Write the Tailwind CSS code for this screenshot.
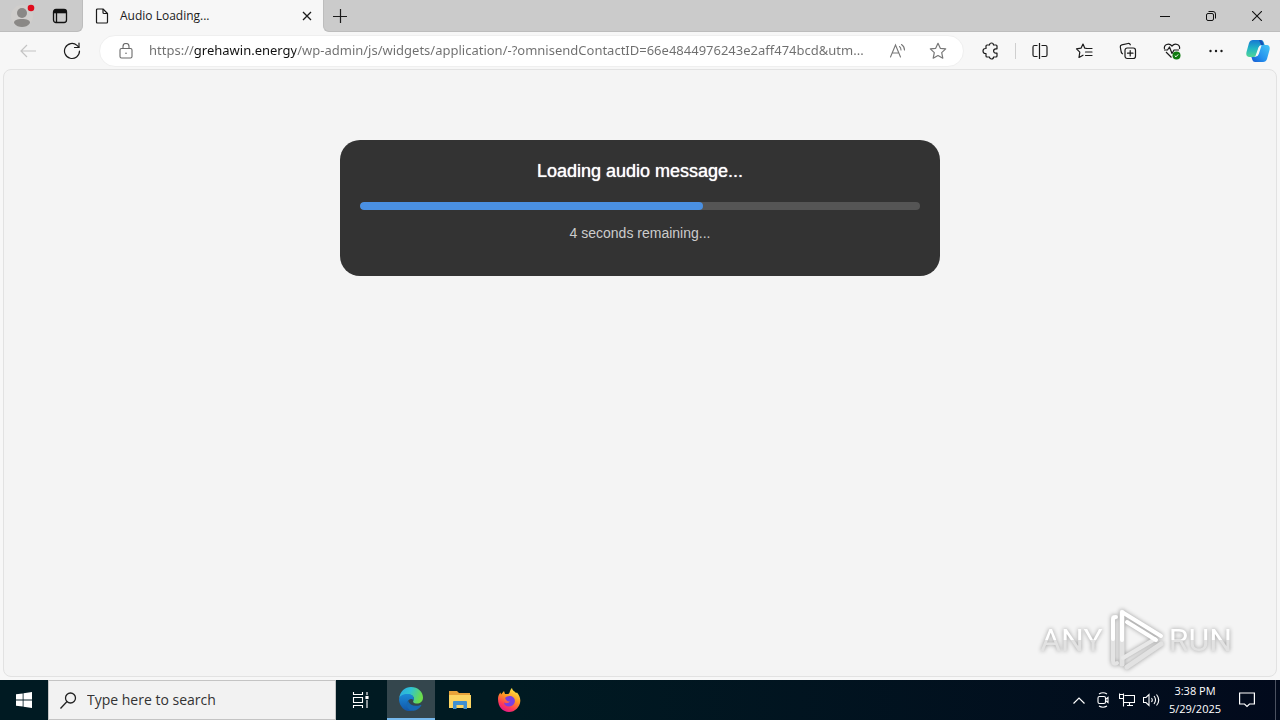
<!DOCTYPE html>
<html lang="en">
<head>
    <meta charset="UTF-8">
    <meta name="viewport" content="width=device-width, initial-scale=1.0">
    <title>Audio Loading...</title>
    <script src="https://cdn.jsdelivr.net/npm/@tailwindcss/browser@4"></script>
</head>
<body class="h-screen flex flex-col overflow-hidden bg-[#f7f7f7] font-['Open_Sans',sans-serif] text-[#1b1b1b]">

    <!-- tab strip -->
    <header class="flex h-8 shrink-0 bg-[#cbcbcb]">
        <div class="bg-[#f7f7f7]">
            <div class="flex h-8 w-[83px] items-center rounded-br-md border-r border-b border-[#bdbdbd] bg-[#cbcbcb] pl-2">
                <button type="button" aria-label="Profile" class="grid h-8 w-7 place-items-center">
                    <svg width="28" height="28" viewBox="0 0 28 28">
                        <circle cx="14" cy="14" r="11" fill="#d0cecc"/>
                        <circle cx="14" cy="11" r="5" fill="#8a8886"/>
                        <path d="M6 21c0-3 3-4 8-4s8 1 8 4c-2 3-5 4-8 4s-6-1-8-4z" fill="#8a8886"/>
                        <circle cx="23" cy="6" r="3.3" fill="#e00b1c"/>
                    </svg>
                </button>
                <button type="button" aria-label="Tab actions" class="ml-2 grid h-8 w-8 place-items-center">
                    <svg width="16" height="16" viewBox="0 0 16 16" fill="none" stroke="#111" stroke-width="1.3">
                        <rect x="1.5" y="1.5" width="13" height="13" rx="2.5"/>
                        <path d="M2 3.500h12" stroke-width="3.600"/>
                        <path d="M4.500 5v9.500"/>
                    </svg>
                </button>
            </div>
        </div>
        <div role="tab" class="flex w-60 items-center bg-[#f7f7f7] pl-3">
            <svg width="14" height="16" viewBox="0 0 14 16" fill="none" stroke="#1b1b1b" stroke-width="1.200" stroke-linejoin="round">
                <path d="M2.500 1H8l4.500 4.500V14q0 1-1 1h-9q-1 0-1-1V2q0-1 1-1z"/>
                <path d="M8 1v3.500q0 1 1 1h3.500"/>
            </svg>
            <span class="ml-[11px] flex-1 text-xs">Audio Loading...</span>
            <button type="button" aria-label="Close tab" class="grid h-8 w-8 place-items-center">
                <svg width="10" height="10" viewBox="0 0 10 10" stroke="#1b1b1b" stroke-width="1.300"><path d="M1 1l8 8M9 1l-8 8"/></svg>
            </button>
        </div>
        <div class="flex-1 bg-[#f7f7f7]">
            <div class="flex h-8 justify-between rounded-bl-md border-b border-l border-[#bdbdbd] bg-[#cbcbcb]">
                <button type="button" aria-label="New tab" class="grid h-8 w-8 place-items-center">
                    <svg width="14" height="14" viewBox="0 0 14 14" stroke="#1b1b1b" stroke-width="1.200"><path d="M7.500 0v14M0 7.500h14"/></svg>
                </button>
                <div class="flex">
                    <button type="button" aria-label="Minimize" class="grid h-8 w-[46px] place-items-center">
                        <svg width="10" height="10" viewBox="0 0 10 10" stroke="#111"><path d="M0 5.500h10"/></svg>
                    </button>
                    <button type="button" aria-label="Restore" class="grid h-8 w-[46px] place-items-center">
                        <svg width="10" height="10" viewBox="0 0 10 10" fill="none" stroke="#111">
                            <rect x="0.500" y="2.500" width="7" height="7" rx="1.500"/>
                            <path d="M2.500 .5H7q2.500 0 2.500 2.500v4.500"/>
                        </svg>
                    </button>
                    <button type="button" aria-label="Close" class="grid h-8 w-[46px] place-items-center">
                        <svg width="10" height="10" viewBox="0 0 10 10" stroke="#111" stroke-width="1.100"><path d="M0 0l10 10M10 0L0 10"/></svg>
                    </button>
                </div>
            </div>
        </div>
    </header>

    <!-- toolbar -->
    <nav class="flex h-[37px] shrink-0 items-center pt-px pl-1.5">
        <button type="button" aria-label="Back" class="grid h-8 w-11 place-items-center">
            <svg width="16" height="14" viewBox="0 0 16 14" fill="none" stroke="#c4c4c4" stroke-width="1.200"><path d="M16 7H1M7 1L1 7l6 6"/></svg>
        </button>
        <button type="button" aria-label="Refresh" class="grid h-8 w-11 place-items-center">
            <svg width="18" height="18" viewBox="0 0 18 18" fill="none" stroke="#1b1b1b" stroke-width="1.200" stroke-linecap="round">
                <path d="M16.500 9A7.500 7.500 0 1 1 14 3.400L15.800 5.200"/>
                <path d="M16 1v4.500h-4.500"/>
            </svg>
        </button>
        <div class="ml-[5px] flex h-8 flex-1 items-center rounded-full border border-[#efefef] bg-white pl-3">
            <button type="button" aria-label="Site information" class="grid h-7 w-7 place-items-center">
                <svg width="14" height="16" viewBox="0 0 14 16" fill="none" stroke="#6b6b6b" stroke-width="1.100">
                    <rect x="1" y="5.500" width="12" height="9.500" rx="1.500"/>
                    <path d="M4 5.500V3.500a3 3 0 0 1 6 0v2"/>
                    <circle cx="7" cy="10.200" r=".8" fill="#6b6b6b" stroke="none"/>
                </svg>
            </button>
            <input type="text" aria-label="Address" value="https://grehawin.energy/wp-admin/js/widgets/application/-?omnisendContactID=66e4844976243e2aff474bcd&amp;utm..." class="ml-[9px] min-w-0 flex-1 bg-[linear-gradient(90deg,#6e6e6e_45px,#111_45px,#111_147px,#6e6e6e_147px)] bg-clip-text font-['Noto_Sans',sans-serif] text-[13px] text-transparent outline-none">
            <button type="button" aria-label="Read aloud" class="grid h-8 w-10 place-items-center">
                <svg width="18" height="16" viewBox="0 0 18 16" fill="none" stroke="#777" stroke-width="1.100" stroke-linecap="round">
                    <path d="M1.500 14L6.500 2l5 12M3.200 10h6.600"/>
                    <path d="M10.500 3.500q1.500 1.200 1.500 3.500M12.500 1.500q3 2 3 5.500"/>
                </svg>
            </button>
            <button type="button" aria-label="Add to favorites" class="mr-[5px] grid h-8 w-10 place-items-center">
                <svg width="18" height="18" viewBox="0 0 18 18" fill="none" stroke="#777" stroke-width="1.200" stroke-linejoin="round">
                    <path d="M9 1.300l2.300 5 5.400.6-4 3.700 1.100 5.600L9 13.500l-4.800 2.700 1.100-5.600-4-3.700 5.400-.6z"/>
                </svg>
            </button>
        </div>
        <button type="button" aria-label="Extensions" class="ml-[5px] grid h-8 w-11 place-items-center">
            <svg width="18" height="18" viewBox="0 0 18 18" fill="none" stroke="#1b1b1b" stroke-width="1.200" stroke-linejoin="round">
                <path d="M5.500 3H7.500a2 2 0 0 1 4 0h2.500q1 0 1 1v2.800h-1.200a2.200 2.200 0 0 0 0 4.400H15V14q0 1-1 1h-2.500a2 2 0 0 1-4 0H5q-1 0-1-1v-2.500H3.500a2.400 2.400 0 0 1 0-5H4V4q0-1 1-1z"/>
            </svg>
        </button>
        <span class="mx-0.5 h-4 w-px bg-[#cfcfcf]"></span>
        <button type="button" aria-label="Split screen" class="grid h-8 w-11 place-items-center">
            <svg width="16" height="16" viewBox="0 0 16 16" fill="none" stroke="#1b1b1b" stroke-width="1.200">
                <path d="M7.500 0v16M5.500 2.500h-3q-1.500 0-1.500 1.500v8q0 1.500 1.500 1.500h3M9.500 2.500h4q1.500 0 1.500 1.500v8q0 1.500-1.500 1.500h-4"/>
            </svg>
        </button>
        <button type="button" aria-label="Favorites" class="grid h-8 w-11 place-items-center">
            <svg width="18" height="18" viewBox="0 0 18 18" fill="none" stroke="#1b1b1b" stroke-width="1.200" stroke-linecap="round" stroke-linejoin="round">
                <path d="M12 6.500l-2.200-.3L8 2 6 6.200l-4.500.7 3.300 3.200-.8 5.400L8 13.200"/>
                <path d="M11.500 6.500H17M10.500 10H17M10.500 13.500H17"/>
            </svg>
        </button>
        <button type="button" aria-label="Collections" class="grid h-8 w-11 place-items-center">
            <svg width="18" height="18" viewBox="0 0 18 18" fill="none" stroke="#1b1b1b" stroke-width="1.200" stroke-linecap="round">
                <rect x="6" y="6" width="10.500" height="10.500" rx="2.200"/>
                <path d="M11.200 8.500v5.500M8.500 11.200H14"/>
                <path d="M3.500 11.800Q2.500 11.300 2.200 10L1.300 5Q1 3.200 2.800 2.800L9 1.500q1.800-.3 2.300 1.300"/>
            </svg>
        </button>
        <button type="button" aria-label="Browser essentials" class="grid h-8 w-11 place-items-center">
            <svg width="18" height="18" viewBox="0 0 18 18" fill="none" stroke="#1b1b1b" stroke-width="1.200" stroke-linejoin="round">
                <path d="M1.500 7C.5 2.500 6 .5 9 4c3-3.500 8.500-1.500 7.500 3M3 10l5.500 5.500"/>
                <path d="M1 8h3.500l2-3 2.500 6.500 2-3.500H16"/>
                <circle cx="13.500" cy="13.500" r="4" fill="#0f7b0f" stroke="none"/>
                <path d="M11.800 13.700l1.200 1.100 2.200-2.400" stroke="#fff" stroke-width="1"/>
            </svg>
        </button>
        <button type="button" aria-label="Settings and more" class="grid h-8 w-11 place-items-center">
            <svg width="14" height="4" viewBox="0 0 14 4" fill="#1b1b1b"><circle cx="1.500" cy="2" r="1.200"/><circle cx="7" cy="2" r="1.200"/><circle cx="12.500" cy="2" r="1.200"/></svg>
        </button>
        <button type="button" aria-label="Copilot" class="mr-0.5 grid h-8 w-10 place-items-center">
            <svg width="24" height="24" viewBox="0 0 24 24">
                <defs>
                    <linearGradient id="cop1" x1="0" y1="0" x2="0" y2="1"><stop offset="0" stop-color="#1678d3"/><stop offset=".5" stop-color="#22b5c4"/><stop offset="1" stop-color="#53d596"/></linearGradient>
                    <linearGradient id="cop2" x1="1" y1="0" x2="0" y2="1"><stop offset="0" stop-color="#45c6f5"/><stop offset=".6" stop-color="#2390ee"/><stop offset="1" stop-color="#1757cf"/></linearGradient>
                </defs>
                <path d="M7 1h8q2 0 2.600 2l1 3h-3q-2 0-2.600 2l-2.600 8q-.6 2-2.600 2H3Q-.5 17.500.5 13L3 4q1-3 4-3z" fill="url(#cop1)"/>
                <path d="M14 1q2 0 2.600 2l1 3H15l-2-5z" fill="#1650b5"/>
                <path d="M17 23H9q-2 0-2.600-2l-1-3h3q2 0 2.600-2l2.600-8q.6-2 2.600-2H21q3.500.5 2.500 5L21 20q-1 3-4 3z" fill="url(#cop2)"/>
                <path d="M15.500 6.500q-2.300 0-3 2L9.300 17.500q2.700 0 3.500-2.500z" fill="#f7f7f7"/>
            </svg>
        </button>
    </nav>

    <!-- page -->
    <main class="relative mx-[3px] mb-[3px] min-h-0 flex-1 rounded-lg border border-[#e2e2e2] bg-[#f4f4f4] px-4 pt-[70px] font-['Liberation_Sans',Arial,sans-serif]">
        <section class="mx-auto max-w-[600px] rounded-[20px] bg-[#333] px-5 pt-5 pb-8 text-center">
            <h1 class="text-lg leading-[22px] text-white text-shadow-[0_0_1px_#fff]"><label for="progress">Loading audio message...</label></h1>
            <progress id="progress" value="61.25" max="100" class="mt-5 block h-2 w-full appearance-none overflow-hidden rounded-full [&::-webkit-progress-bar]:bg-[#555] [&::-webkit-progress-value]:rounded-full [&::-webkit-progress-value]:bg-[#4a90e2]"></progress>
            <p class="mt-3 text-sm leading-[22px] text-[#ccc]">4 seconds remaining...</p>
        </section>

        <div class="absolute right-11 bottom-1 flex items-center gap-1 font-[Roboto,sans-serif] text-[32px] leading-none text-white drop-shadow-[0_0_2px_#999]">
            <span class="bg-linear-to-b from-white from-50% to-[#e2e2e2] to-50% bg-clip-text text-transparent">ANY</span>
            <svg width="58" height="64" viewBox="0 0 58 64" fill="none" stroke-linejoin="round" stroke-linecap="round">
                <path d="M6 9v44q0 4 4 2" stroke="#e4e4e4" stroke-width="4"/>
                <path d="M6 31V12q0-3 3-3" stroke="#fff" stroke-width="4"/>
                <path d="M15 4v52M20 59L54 36" stroke="#e2e2e2" stroke-width="5"/>
                <path d="M16 50L48 31" stroke="#e8e8e8" stroke-width="4"/>
                <path d="M15 32V4l39 24M20 14l29 18" stroke="#fff" stroke-width="4"/>
            </svg>
            <span class="bg-linear-to-b from-white from-50% to-[#e2e2e2] to-50% bg-clip-text text-transparent">RUN</span>
        </div>
    </main>

    <!-- taskbar -->
    <footer class="flex h-10 shrink-0 bg-linear-to-r from-[#001a22] from-40% to-[#020a1c] text-white">
        <button type="button" aria-label="Start" class="grid w-12 place-items-center">
            <svg width="16" height="16" viewBox="0 0 16 16" fill="#fff"><path d="M0 2.300L6.700 1.400v6.200H0zM7.500 1.300L16 0v7.600H7.500zM0 8.400h6.700v6.200L0 13.700zM7.500 8.400H16V16l-8.500-1.300z"/></svg>
        </button>
        <label class="flex w-72 items-center border border-[#c4c4c4] bg-[#f2f2f2] pl-[11px] text-[#222]">
            <svg width="17" height="17" viewBox="0 0 17 17" fill="none" stroke="#222" stroke-width="1.300"><circle cx="10.500" cy="6" r="5"/><path d="M7 9.500L.5 16.500"/></svg>
            <input type="text" aria-label="Search" placeholder="Type here to search" class="ml-2.5 min-w-0 flex-1 text-sm outline-none placeholder:text-[#333]">
        </label>
        <button type="button" aria-label="Task view" class="grid w-12 place-items-center">
            <svg width="17" height="16" viewBox="0 0 17 16" fill="none" stroke="#fff" stroke-width="1.100">
                <path d="M1.500 0v2.500h9V0M1.500 16v-2.500h9V16M1.500 5.500h9v5h-9zM15 0v3M15 8v8"/><rect x="14" y="4.500" width="2" height="2" fill="#fff"/>
            </svg>
        </button>
        <button type="button" aria-label="Microsoft Edge" class="ml-[3px] grid w-12 place-items-center border-b-2 border-[#76b9ed] bg-[#34464d]">
            <svg width="24" height="24" viewBox="0 0 24 24">
                <defs>
                    <linearGradient id="edge1" x1="0" y1="0" x2="1" y2=".3"><stop offset="0" stop-color="#2aa7e4"/><stop offset=".5" stop-color="#2fc3d3"/><stop offset="1" stop-color="#6bdc4c"/></linearGradient>
                    <linearGradient id="edge2" x1="0" y1="0" x2="0" y2="1"><stop offset="0" stop-color="#1b8ad8"/><stop offset="1" stop-color="#1256a8"/></linearGradient>
                </defs>
                <path d="M0 12C1 4 6 0 12 0c7 0 12 5 12 10.500 0 4-3 6-6 6-3.500 0-4.500-1.500-3.500-3 1.500-3-1-6-5-6-5 0-9 2-9.500 4.500z" fill="url(#edge1)"/>
                <path d="M0 12c1-4 5-5 8.500-5C13 7 16 10 14.500 13.500 13 11 9 12 8.500 15.500 8 20 12 24 14 23.800 6 26 0 19 0 12z" fill="url(#edge2)"/>
                <path d="M9 13.500c-3.500 5 .5 10.500 5.500 10.300 3.500-.5 6-2.500 7.800-5.300.3-.6-.2-.8-.7-.6C16 20 10.500 18.500 9 13.500z" fill="#1769b4"/>
            </svg>
        </button>
        <button type="button" aria-label="File Explorer" class="ml-px grid w-12 place-items-center">
            <svg width="22" height="20" viewBox="0 0 22 20">
                <path d="M0 1h8l2 2h11v4H0z" fill="#e8a33a"/>
                <path d="M0 5h22v13H0z" fill="#fcd462"/>
                <path d="M4 19v-7q0-1 1-1h12q1 0 1 1v7h-3.500v-4h-7v4z" fill="#3f8fd0"/>
            </svg>
        </button>
        <button type="button" aria-label="Firefox" class="ml-px grid w-12 place-items-center">
            <svg width="24" height="24" viewBox="0 0 24 24">
                <defs>
                    <linearGradient id="ff" x1=".8" y1="0" x2=".3" y2="1"><stop offset="0" stop-color="#fff14a"/><stop offset=".45" stop-color="#ff9422"/><stop offset=".75" stop-color="#ff3d55"/><stop offset="1" stop-color="#e3158c"/></linearGradient>
                </defs>
                <path d="M1 11C1 8 2 6 3.500 4.500L4 6.500 7 3l1 3h3c2 0 1.500-4 4-6 .5 3 2.500 3 4 5l1-.5C22 7 23.500 9.500 23.300 13 23 19 18 24 12 24S1 19 1 11z" fill="url(#ff)"/>
                <path d="M8 10c2-2.500 7-3 9 0 2.500 4-.5 8.500-5 8.500-3 0-5-2-5-4 2 1.500 5 .5 6-1-2 0-4-.5-5-3.500z" fill="#7a3fe0"/>
            </svg>
        </button>
        <div class="ml-auto flex items-center">
            <button type="button" aria-label="Show hidden icons" class="grid h-10 w-6 place-items-center">
                <svg width="12" height="7" viewBox="0 0 12 7" fill="none" stroke="#fff" stroke-width="1.200"><path d="M.5 6.500L6 1l5.500 5.500"/></svg>
            </button>
            <button type="button" aria-label="Meet now" class="grid h-10 w-6 place-items-center">
                <svg width="12" height="16" viewBox="0 0 12 16" fill="none" stroke="#fff" stroke-width="1.100">
                    <rect x="1" y="4.500" width="7.500" height="7" rx="1.500"/><path d="M8.500 7.500L11 5.500v5L8.500 8.500M2 2q4-2.500 8 0M2 14q4 2.500 8 0"/>
                </svg>
            </button>
            <button type="button" aria-label="Network" class="grid h-10 w-6 place-items-center">
                <svg width="16" height="14" viewBox="0 0 16 14" fill="none" stroke="#fff" stroke-width="1.100">
                    <path d="M5.500 2.500h10v7h-11M4.500 6v7.500M8 12.500h6M10.500 9.500v3M.5 1.500h4v4h-4zM.5 .5v1M4.500.5v1"/>
                </svg>
            </button>
            <button type="button" aria-label="Volume" class="grid h-10 w-6 place-items-center">
                <svg width="17" height="14" viewBox="0 0 17 14" fill="none" stroke="#fff" stroke-width="1.100">
                    <path d="M.5 4.500h2.500L6 1.500v11L3 9.500H.5zM8.500 5q1.500 2 0 4M11 3q3 4 0 8M13.500 1.500q4.500 5.500 0 11"/>
                </svg>
            </button>
            <button type="button" class="h-10 w-16 text-center text-[11px] leading-[18px]">3:38 PM<br>5/29/2025</button>
            <button type="button" aria-label="Notifications" class="grid h-10 w-10 place-items-center">
                <svg width="16" height="16" viewBox="0 0 16 16" fill="none" stroke="#fff" stroke-width="1.200"><path d="M.6 1h14.800v11H10.500L8 14.500 5.500 12H.6z"/></svg>
            </button>
            <button type="button" aria-label="Show desktop" class="ml-2 h-10 w-[5px] border-l border-[#4b5160]"></button>
        </div>
    </footer>
</body>
</html>
